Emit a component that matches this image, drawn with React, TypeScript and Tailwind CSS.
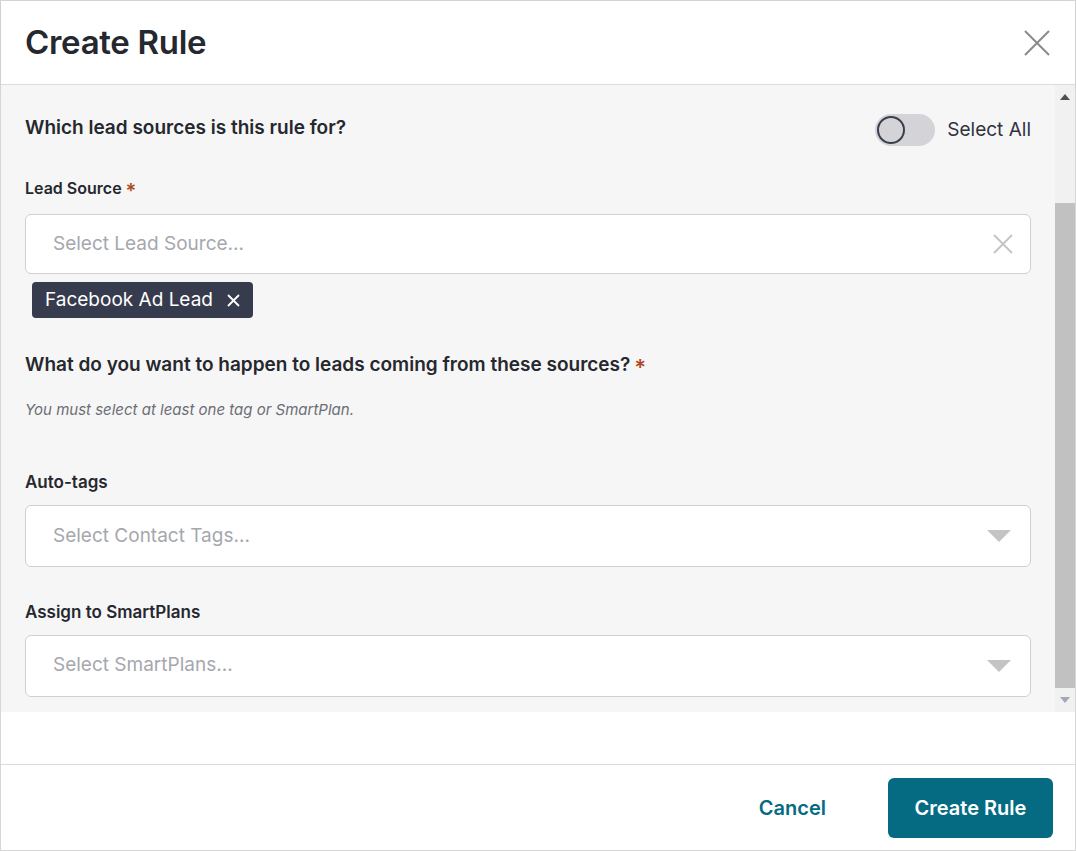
import React from "react";

const Caret = () => (
  <svg width="24" height="12" viewBox="0 0 24 12"><path d="M0 0h24L12 12z" fill="#c4c4c4" /></svg>
);

export default function App() {
  return (
    <div className="w-[1076px] h-[851px] bg-white border border-[#d6d6d6] flex flex-col text-[#25282e]" style={{ fontFamily: "Inter, 'Noto Sans', sans-serif" }}>
      <div className="h-[84px] shrink-0 flex items-center justify-between pl-6 pr-6 border-b border-[#dcdcdc] shadow-[0_2px_6px_rgba(0,0,0,0.06)]">
        <h1 className="text-[33px] font-semibold tracking-[-0.3px]">Create Rule</h1>
        <svg width="28" height="28" viewBox="0 0 28 28" stroke="#8a8a8a" strokeWidth="2"><path d="M2 2L26 26M26 2L2 26" /></svg>
      </div>
      <div className="h-[627px] shrink-0 flex bg-[#f6f6f6]">
        <div className="flex-1 pl-6 pr-6 pt-[26px]">
          <div className="flex items-center justify-between">
            <div className="text-[19px] font-semibold">Which lead sources is this rule for?</div>
            <div className="flex items-center gap-3 mt-[3px]">
              <div className="w-[60px] h-[32px] rounded-full bg-[#d4d4d8] flex items-center px-[2px]">
                <div className="w-[28px] h-[28px] rounded-full border-2 border-[#3a3f4b] bg-[#d4d4d8]" />
              </div>
              <span className="text-[19px] text-[#2f3340]">Select All</span>
            </div>
          </div>
          <div className="mt-[30px] text-[16px] font-semibold">Lead Source<span className="text-[#b04a1c] text-[20px] ml-1 align-top">*</span></div>
          <div className="mt-[8px] h-[60px] bg-white border border-[#d0d0d0] rounded-md flex items-center justify-between pl-[27px] pr-[16px]">
            <span className="text-[19px] text-[#a5a8ad]">Select Lead Source...</span>
            <svg width="22" height="22" viewBox="0 0 22 22" stroke="#c4c4c4" strokeWidth="1.8"><path d="M2 2L20 20M20 2L2 20" /></svg>
          </div>
          <div className="mt-[8px] ml-[7px] inline-flex items-center gap-[14px] h-[36px] px-[13px] rounded bg-[#363c4d] text-white text-[19px]">
            Facebook Ad Lead
            <svg width="13" height="13" viewBox="0 0 13 13" stroke="white" strokeWidth="1.8"><path d="M1 1L12 12M12 1L1 12" /></svg>
          </div>
          <div className="mt-[33px] text-[19px] font-semibold">What do you want to happen to leads coming from these sources?<span className="text-[#b04a1c] text-[22px] ml-1 align-top">*</span></div>
          <div className="mt-[15px] text-[15px] italic text-[#6b6e75]">You must select at least one tag or SmartPlan.</div>
          <div className="mt-[48px] text-[17px] font-semibold">Auto-tags</div>
          <div className="mt-[10px] h-[62px] bg-white border border-[#d0d0d0] rounded-md flex items-center justify-between pl-[27px] pr-[19px]">
            <span className="text-[19px] text-[#a5a8ad]">Select Contact Tags...</span>
            <Caret />
          </div>
          <div className="mt-[33px] text-[17px] font-semibold">Assign to SmartPlans</div>
          <div className="mt-[9px] h-[62px] bg-white border border-[#d0d0d0] rounded-md flex items-center justify-between pl-[27px] pr-[19px]">
            <span className="text-[19px] text-[#a5a8ad]">Select SmartPlans...</span>
            <Caret />
          </div>
        </div>
        <div className="w-[20px] bg-[#f1f1f1] flex flex-col items-center">
          <div className="h-[24px] flex items-center"><svg width="10" height="6" viewBox="0 0 10 6"><path d="M0 6L5 0L10 6z" fill="#505050" /></svg></div>
          <div className="h-[94px]" />
          <div className="w-[20px] flex-1 bg-[#c1c1c1]" />
          <div className="h-[24px] flex items-center"><svg width="10" height="6" viewBox="0 0 10 6"><path d="M0 0L5 6L10 0z" fill="#a3a8b6" /></svg></div>
        </div>
      </div>
      <div className="h-[53px] shrink-0 border-b border-[#dcdcdc]" />
      <div className="flex-1 flex items-center justify-end gap-[62px] pr-[22px]">
        <button className="text-[#046b82] text-[20px] font-semibold">Cancel</button>
        <button className="w-[165px] h-[60px] rounded-md bg-[#046b82] text-white text-[20px] font-semibold">Create Rule</button>
      </div>
    </div>
  );
}
